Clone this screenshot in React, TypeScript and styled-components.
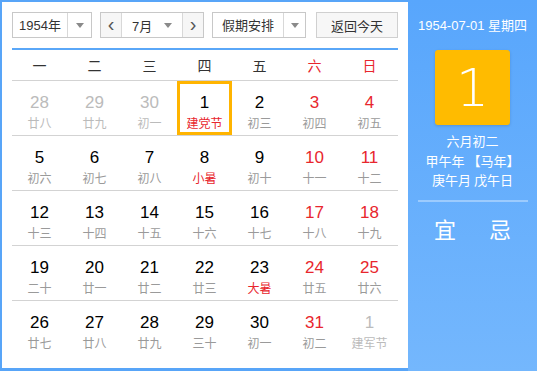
import React from "react";
import styled, { createGlobalStyle } from "styled-components";

const GlobalStyle = createGlobalStyle`
  html, body {
    margin: 0;
    padding: 0;
    background: #ffffff;
  }
  body {
    font-family: "Liberation Sans", "Noto Sans CJK SC", sans-serif;
  }
`;

type Day = {
  num: number;
  lunar: string;
  other?: boolean;
  weekend?: boolean;
  fest?: boolean;
  today?: boolean;
};

const weekdays = ["一", "二", "三", "四", "五", "六", "日"];

const lunarRows: [number, string, Partial<Day>?][][] = [
  [
    [28, "廿八", { other: true }],
    [29, "廿九", { other: true }],
    [30, "初一", { other: true }],
    [1, "建党节", { fest: true, today: true }],
    [2, "初三"],
    [3, "初四"],
    [4, "初五"],
  ],
  [
    [5, "初六"],
    [6, "初七"],
    [7, "初八"],
    [8, "小暑", { fest: true }],
    [9, "初十"],
    [10, "十一"],
    [11, "十二"],
  ],
  [
    [12, "十三"],
    [13, "十四"],
    [14, "十五"],
    [15, "十六"],
    [16, "十七"],
    [17, "十八"],
    [18, "十九"],
  ],
  [
    [19, "二十"],
    [20, "廿一"],
    [21, "廿二"],
    [22, "廿三"],
    [23, "大暑", { fest: true }],
    [24, "廿五"],
    [25, "廿六"],
  ],
  [
    [26, "廿七"],
    [27, "廿八"],
    [28, "廿九"],
    [29, "三十"],
    [30, "初一"],
    [31, "初二"],
    [1, "建军节", { other: true }],
  ],
];

const weeks: Day[][] = lunarRows.map((row) =>
  row.map(([num, lunar, extra], i) => ({
    num,
    lunar,
    weekend: i >= 5,
    ...(extra || {}),
  }))
);

const App = () => {
  return (
    <>
      <GlobalStyle />
      <Widget>
        <Main>
          <Toolbar>
            <Select width={80}>
              <SelectText width={55}>1954年</SelectText>
              <Caret />
            </Select>
            <MonthGroup>
              <NavBtn>‹</NavBtn>
              <MonthSelect>
                <span>7月</span>
                <Caret />
              </MonthSelect>
              <NavBtn side="right">›</NavBtn>
            </MonthGroup>
            <Select width={94}>
              <SelectText width={71}>假期安排</SelectText>
              <Caret />
            </Select>
            <TodayBtn>返回今天</TodayBtn>
          </Toolbar>

          <WeekHead>
            {weekdays.map((w, i) => (
              <HeadCell key={w} red={i >= 5}>
                {w}
              </HeadCell>
            ))}
          </WeekHead>

          {weeks.map((week, wi) => (
            <Week key={wi} last={wi === weeks.length - 1}>
              {week.map((d, di) => (
                <Cell key={di} today={d.today}>
                  <DayNum
                    tone={d.other ? "gray" : d.weekend ? "red" : "black"}
                  >
                    {d.num}
                  </DayNum>
                  <Lunar tone={d.other ? "gray" : d.fest ? "red" : "normal"}>
                    {d.lunar}
                  </Lunar>
                </Cell>
              ))}
            </Week>
          ))}
        </Main>

        <Side>
          <SideDate>1954-07-01 星期四</SideDate>
          <BigDay>1</BigDay>
          <SideLunar>
            <div>六月初二</div>
            <div>甲午年 【马年】</div>
            <div>庚午月 戊午日</div>
          </SideLunar>
          <SideRule />
          <YiJi>
            <span>宜</span>
            <span>忌</span>
          </YiJi>
        </Side>
      </Widget>
    </>
  );
};

export default App;

const Widget = styled.div`
  width: 537px;
  height: 371px;
  display: flex;
  background: #58a5f8;
  box-sizing: border-box;
`;

const Main = styled.div`
  width: 406px;
  margin: 2px 0 3px 2px;
  background: #ffffff;
  padding: 10px 10px 0 10px;
  box-sizing: border-box;
`;

const Toolbar = styled.div`
  display: flex;
  align-items: stretch;
  height: 26px;
  font-family: "Liberation Sans", "Noto Sans CJK SC", sans-serif;
  font-size: 13px;
  color: #333;
`;

const Select = styled.div<{ width: number }>`
  display: flex;
  width: ${(p) => p.width}px;
  border: 1px solid #c8c8c8;
  box-sizing: border-box;
  background: #fff;
  margin-right: 8px;
`;

const SelectText = styled.div<{ width: number }>`
  width: ${(p) => p.width - 1}px;
  border-right: 1px solid #d8d8d8;
  display: flex;
  align-items: center;
  justify-content: center;
  line-height: 1;
`;

const Caret = styled.div`
  flex: 1;
  display: flex;
  align-items: center;
  justify-content: center;
  &::after {
    content: "";
    border-left: 4px solid transparent;
    border-right: 4px solid transparent;
    border-top: 5px solid #8a8a8a;
  }
`;

const MonthGroup = styled.div`
  display: flex;
  width: 104px;
  border: 1px solid #c8c8c8;
  box-sizing: border-box;
  margin-right: 8px;
`;

const MonthSelect = styled.div`
  width: 60px;
  display: flex;
  align-items: center;
  padding-left: 10px;
  box-sizing: border-box;
  background: #fff;
  & > span {
    width: 30px;
  }
  & > ${Caret} {
    justify-content: flex-start;
    padding-left: 2px;
  }
`;

const NavBtn = styled.div<{ side?: "right" }>`
  width: 21px;
  background: #f6f6f6;
  display: flex;
  align-items: center;
  justify-content: center;
  font-size: 20px;
  line-height: 1;
  color: #555;
  padding-bottom: 3px;
  box-sizing: border-box;
  border-right: ${(p) => (p.side ? "none" : "1px solid #d8d8d8")};
  border-left: ${(p) => (p.side ? "1px solid #d8d8d8" : "none")};
`;

const TodayBtn = styled.div`
  width: 82px;
  margin-left: 2px;
  border: 1px solid #d0d0d0;
  background: #f7f7f7;
  box-sizing: border-box;
  display: flex;
  align-items: center;
  justify-content: center;
`;

const WeekHead = styled.div`
  display: grid;
  grid-template-columns: repeat(7, 55px);
  margin-top: 10px;
  border-top: 2px solid #5aa7f8;
  border-bottom: 1px solid #d3d3d3;
  height: 33px;
  box-sizing: border-box;
`;

const HeadCell = styled.div<{ red?: boolean }>`
  display: flex;
  align-items: center;
  justify-content: center;
  font-family: "Noto Sans CJK SC", sans-serif;
  font-size: 14px;
  color: ${(p) => (p.red ? "#e8262d" : "#333")};
`;

const Week = styled.div<{ last?: boolean }>`
  display: grid;
  grid-template-columns: repeat(7, 55px);
  height: 55px;
  box-sizing: border-box;
  border-bottom: ${(p) => (p.last ? "none" : "1px solid #d3d3d3")};
`;

const Cell = styled.div<{ today?: boolean }>`
  height: 54px;
  box-sizing: border-box;
  display: flex;
  flex-direction: column;
  align-items: center;
  padding-top: ${(p) => (p.today ? "9px" : "12px")};
  border: ${(p) => (p.today ? "3px solid #ffb400" : "none")};
`;

const toneColor = {
  black: "#000",
  red: "#e8262d",
  gray: "#bbbbbb",
  normal: "#9a9a9a",
};

const DayNum = styled.div<{ tone: keyof typeof toneColor }>`
  font-family: "Liberation Sans", sans-serif;
  font-size: 17px;
  line-height: 19px;
  color: ${(p) => toneColor[p.tone]};
`;

const Lunar = styled.div<{ tone: keyof typeof toneColor }>`
  font-family: "Noto Sans CJK SC", sans-serif;
  font-size: 12px;
  line-height: 16px;
  margin-top: 3px;
  color: ${(p) => toneColor[p.tone]};
`;

const Side = styled.div`
  flex: 1;
  background: linear-gradient(180deg, #58a6fc 0%, #74b7fd 100%);
  display: flex;
  flex-direction: column;
  align-items: center;
  color: #fff;
  font-family: "Liberation Sans", "Noto Sans CJK SC", sans-serif;
`;

const SideDate = styled.div`
  margin-top: 16px;
  font-size: 13px;
  line-height: 20px;
`;

const BigDay = styled.div`
  margin-top: 14px;
  width: 75px;
  height: 75px;
  background: #ffbb00;
  border-radius: 3px;
  display: flex;
  align-items: center;
  justify-content: center;
  font-family: "DejaVu Sans", "Liberation Sans", sans-serif;
  font-weight: 200;
  font-size: 52px;
  box-shadow: 0 1px 3px rgba(0, 0, 0, 0.15);
`;

const SideLunar = styled.div`
  margin-top: 6px;
  font-family: "Noto Sans CJK SC", sans-serif;
  font-size: 13px;
  line-height: 19.5px;
  text-align: center;
`;

const SideRule = styled.div`
  margin-top: 10px;
  width: 110px;
  height: 2px;
  background: rgba(255, 255, 255, 0.35);
`;

const YiJi = styled.div`
  margin-top: 12px;
  width: 110px;
  display: flex;
  justify-content: space-around;
  font-family: "Noto Sans CJK SC", sans-serif;
  font-size: 22px;
  line-height: 28px;
`;
